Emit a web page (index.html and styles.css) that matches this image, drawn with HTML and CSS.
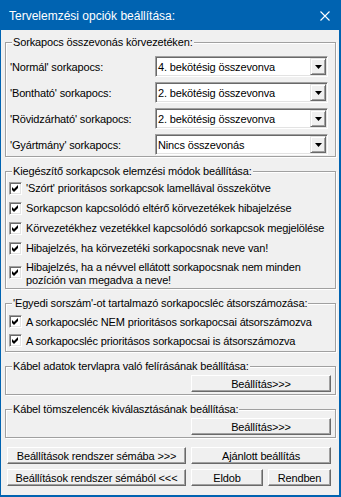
FILE: index.html
```html
<!DOCTYPE html>
<html lang="hu">
<head>
    <meta charset="UTF-8">
    <title>Tervelemzési opciók beállítása</title>
    <link rel="stylesheet" href="styles.css">
</head>
<body>
    <div class="window">
        <div class="titlebar">
            <span class="title">Tervelemzési opciók beállítása:</span>
            <svg class="close" width="10" height="10" viewBox="0 0 10 10"><path d="M0.5 0.5L9.5 9.5M9.5 0.5L0.5 9.5" stroke="#fff" stroke-width="1.1" fill="none"/></svg>
        </div>
        <div class="body">
            <fieldset class="group group-merge">
                <legend>Sorkapocs összevonás körvezetéken:</legend>
                <div class="rows">
                    <div class="combo-row">
                        <span class="label">'Normál' sorkapocs:</span>
                        <div class="combo"><span class="combo-value">4. bekötésig összevonva</span><span class="combo-btn"><svg width="7" height="4" viewBox="0 0 7 4"><path d="M0 0h7L3.5 4z" fill="#000"/></svg></span></div>
                    </div>
                    <div class="combo-row">
                        <span class="label">'Bontható' sorkapocs:</span>
                        <div class="combo"><span class="combo-value">2. bekötésig összevonva</span><span class="combo-btn"><svg width="7" height="4" viewBox="0 0 7 4"><path d="M0 0h7L3.5 4z" fill="#000"/></svg></span></div>
                    </div>
                    <div class="combo-row">
                        <span class="label">'Rövidzárható' sorkapocs:</span>
                        <div class="combo"><span class="combo-value">2. bekötésig összevonva</span><span class="combo-btn"><svg width="7" height="4" viewBox="0 0 7 4"><path d="M0 0h7L3.5 4z" fill="#000"/></svg></span></div>
                    </div>
                    <div class="combo-row">
                        <span class="label">'Gyártmány' sorkapocs:</span>
                        <div class="combo"><span class="combo-value">Nincs összevonás</span><span class="combo-btn"><svg width="7" height="4" viewBox="0 0 7 4"><path d="M0 0h7L3.5 4z" fill="#000"/></svg></span></div>
                    </div>
                </div>
            </fieldset>

            <fieldset class="group group-modes">
                <legend>Kiegészítő sorkapcsok elemzési módok beállítása:</legend>
                <div class="check-row">
                    <span class="check"><svg width="7" height="7" viewBox="0 0 7 7"><path d="M0 2L2 4L6 0V3L2 7L0 5Z" fill="#000"/></svg></span>
                    <span>'Szórt' prioritásos sorkapcsok lamellával összekötve</span>
                </div>
                <div class="check-row">
                    <span class="check"><svg width="7" height="7" viewBox="0 0 7 7"><path d="M0 2L2 4L6 0V3L2 7L0 5Z" fill="#000"/></svg></span>
                    <span>Sorkapcson kapcsolódó eltérő körvezetékek hibajelzése</span>
                </div>
                <div class="check-row">
                    <span class="check"><svg width="7" height="7" viewBox="0 0 7 7"><path d="M0 2L2 4L6 0V3L2 7L0 5Z" fill="#000"/></svg></span>
                    <span>Körvezetékhez vezetékkel kapcsolódó sorkapcsok megjelölése</span>
                </div>
                <div class="check-row">
                    <span class="check"><svg width="7" height="7" viewBox="0 0 7 7"><path d="M0 2L2 4L6 0V3L2 7L0 5Z" fill="#000"/></svg></span>
                    <span>Hibajelzés, ha körvezetéki sorkapocsnak neve van!</span>
                </div>
                <div class="check-row multi">
                    <span class="check"><svg width="7" height="7" viewBox="0 0 7 7"><path d="M0 2L2 4L6 0V3L2 7L0 5Z" fill="#000"/></svg></span>
                    <span>Hibajelzés, ha a névvel ellátott sorkapocsnak nem minden<br>pozíción van megadva a neve!</span>
                </div>
            </fieldset>

            <fieldset class="group group-renumber">
                <legend>'Egyedi sorszám'-ot tartalmazó sorkapocsléc átsorszámozása:</legend>
                <div class="check-row">
                    <span class="check"><svg width="7" height="7" viewBox="0 0 7 7"><path d="M0 2L2 4L6 0V3L2 7L0 5Z" fill="#000"/></svg></span>
                    <span>A sorkapocsléc NEM prioritásos sorkapocsai átsorszámozva</span>
                </div>
                <div class="check-row">
                    <span class="check"><svg width="7" height="7" viewBox="0 0 7 7"><path d="M0 2L2 4L6 0V3L2 7L0 5Z" fill="#000"/></svg></span>
                    <span>A sorkapocsléc prioritásos sorkapocsai is átsorszámozva</span>
                </div>
            </fieldset>

            <fieldset class="group group-action">
                <legend>Kábel adatok tervlapra való felírásának beállítása:</legend>
                <button class="btn btn-setup">Beállítás&gt;&gt;&gt;</button>
            </fieldset>

            <fieldset class="group group-action">
                <legend>Kábel tömszelencék kiválasztásának beállítása:</legend>
                <button class="btn btn-setup">Beállítás&gt;&gt;&gt;</button>
            </fieldset>

            <div class="actions">
                <button class="btn">Beállítások rendszer sémába &gt;&gt;&gt;</button>
                <button class="btn">Ajánlott beállítás</button>
                <button class="btn">Beállítások rendszer sémából &lt;&lt;&lt;</button>
                <div class="pair">
                    <button class="btn btn-cancel">Eldob</button>
                    <button class="btn btn-ok">Rendben</button>
                </div>
            </div>
        </div>
    </div>
</body>
</html>
```

FILE: styles.css
```css
body {
    margin: 0;
    background: #fff;
    font-family: "Liberation Sans", Arial, sans-serif;
    font-size: 11px;
    color: #000;
}
.window {
    width: 341px;
    height: 497px;
    display: flex;
    flex-direction: column;
}
.titlebar {
    height: 30px;
    flex: none;
    box-sizing: border-box;
    padding: 1px 11px 0 9px;
    background: #0063b1;
    color: #fff;
    font-size: 12px;
    display: flex;
    align-items: center;
    justify-content: space-between;
}
.close {
    display: block;
}
.body {
    flex: 1;
    background: #f0f0f0;
    border: solid #0063b1;
    border-width: 0 2px 2px 1px;
    padding: 6px 0 0 4px;
    letter-spacing: -0.15px;
}
.group {
    width: 331px;
    box-sizing: border-box;
    min-inline-size: 0;
    margin: 8px 0 0;
    padding: 0;
    border: 1px solid #a0a0a0;
    box-shadow: inset 1px 1px #fff, 1px 1px #fff;
}
.group legend {
    margin-left: 6px;
    padding: 0 1px;
    line-height: 13px;
    background: #f0f0f0;
    white-space: nowrap;
}
.group-merge {
    margin-top: 0;
    padding: 7px 0 1px;
}
.rows {
    display: flex;
    flex-direction: column;
    gap: 5px;
}
.combo-row {
    display: flex;
    align-items: center;
    height: 21px;
    padding: 0 7px 0 4px;
}
.label {
    white-space: nowrap;
}
.combo {
    margin-left: auto;
    width: 173px;
    height: 21px;
    box-sizing: border-box;
    padding: 1px 1px 1px 2px;
    background: #fff;
    border: 1px solid;
    border-color: #a0a0a0 #fff #fff #a0a0a0;
    box-shadow: inset 1px 1px #696969, inset -1px -1px #e3e3e3;
    display: flex;
    align-items: center;
}
.combo-value {
    flex: 1;
    white-space: nowrap;
}
.combo-btn {
    width: 16px;
    height: 17px;
    box-sizing: border-box;
    background: #f0f0f0;
    border: 1px solid;
    border-color: #e3e3e3 #696969 #696969 #e3e3e3;
    box-shadow: inset 1px 1px #fff, inset -1px -1px #a0a0a0;
    display: flex;
    align-items: center;
    justify-content: center;
}
.combo-btn svg {
    display: block;
}
.group-modes {
    padding: 0 0 1px;
}
.check-row {
    display: flex;
    align-items: center;
    gap: 4px;
    height: 20px;
    padding-left: 3px;
    white-space: nowrap;
}
.check-row.multi {
    height: auto;
    align-items: flex-start;
    padding-top: 3px;
    line-height: 13px;
}
.check-row.multi .check {
    margin-top: 5px;
}
.check {
    flex: none;
    width: 13px;
    height: 13px;
    box-sizing: border-box;
    background: #fff;
    border: 1px solid;
    border-color: #a0a0a0 #fff #fff #a0a0a0;
    box-shadow: inset 1px 1px #696969, inset -1px -1px #e3e3e3;
    display: flex;
    align-items: center;
    justify-content: center;
}
.check svg {
    display: block;
}
.group-renumber {
    padding: 2px 0 1px;
}
.group-renumber .check-row {
    height: 19px;
}
.group-action {
    padding: 2px 0 2px;
}
.btn {
    height: 17px;
    box-sizing: border-box;
    margin: 0;
    padding: 0;
    font-family: inherit;
    font-size: 11px;
    letter-spacing: inherit;
    color: #000;
    background: #f0f0f0;
    border: 1px solid;
    border-color: #fff #696969 #696969 #fff;
    box-shadow: inset -1px -1px #a0a0a0;
    white-space: nowrap;
}
.btn-setup {
    display: block;
    width: 140px;
    margin-left: 185px;
}
.actions {
    display: grid;
    grid-template-columns: 179px 140px;
    column-gap: 5px;
    row-gap: 5px;
    margin: 9px 0 0 2px;
}
.pair {
    display: flex;
    gap: 5px;
}
.btn-cancel {
    width: 72px;
}
.btn-ok {
    width: 63px;
}
```
